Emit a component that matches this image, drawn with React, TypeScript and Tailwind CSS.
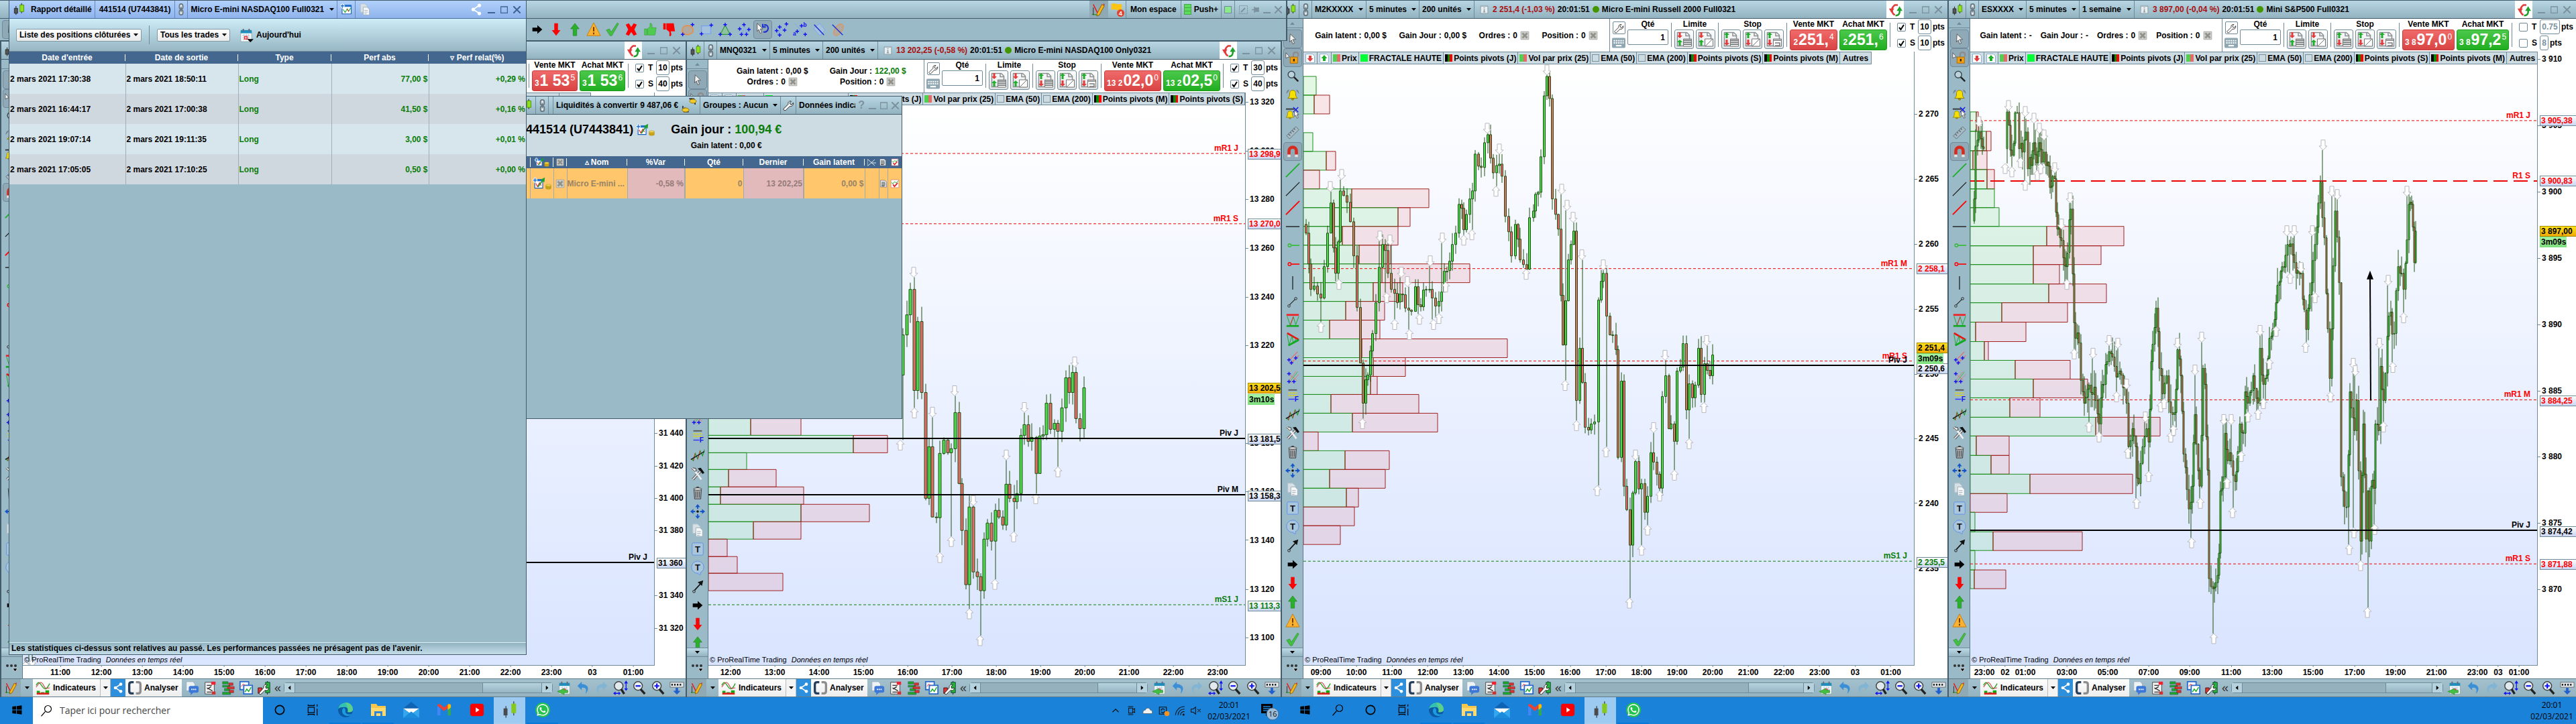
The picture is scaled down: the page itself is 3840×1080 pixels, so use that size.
import type { ReactNode } from 'react'
import { FaWhatsapp } from 'react-icons/fa'
import clsx from 'clsx'

type Tone = 'red' | 'green' | 'black' | 'last' | 'timer'

interface Level {
  y: number
  name: string
  tone: 'red' | 'green' | 'black'
  thick?: boolean
}

interface ChartData {
  x0: number
  y0: number
  w: number
  h: number
  step: number
  body: number
  wick: number
  series: number[][][]
  // tip of every fractal arrow
  tops: number[][]
  bottoms: number[][]
  // [top, bottom, end of green part, end of red part]
  volume: number[][]
  levels: Level[]
  prices: [number, string][]
  tags: [number, string, Tone][]
  times: [number, string][]
  trend?: boolean
}

/* ------------------------------------------------------------------ data */

const hours = (start: number, gap: number, labels: string[]): [number, string][] =>
  labels.map((l, i) => [start + i * gap, l])

const dow: ChartData = {
  x0: 34, y0: 157, w: 941, h: 836, step: 5, body: 4, wick: 12,
  series: [[[38, 960], [43, 972], [48, 968]]],
  tops: [],
  bottoms: [[38, 988], [48, 985]],
  volume: [],
  levels: [{ y: 840, name: 'Piv J', tone: 'black', thick: false }],
  prices: [[646, '31 440'], [695, '31 420'], [743, '31 400'], [791, '31 380'], [888, '31 340'], [937, '31 320']],
  tags: [[840, '31 360', 'black']],
  times: hours(90, 61, ['11:00', '12:00', '13:00', '14:00', '15:00', '16:00', '17:00', '18:00', '19:00', '20:00', '21:00', '22:00', '23:00', '03', '01:00']),
}

const nasdaq: ChartData = {
  x0: 1056, y0: 157, w: 800, h: 836, step: 5.5, body: 4, wick: 22,
  series: [[
    [1341, 560], [1346, 500], [1352, 470], [1357, 432], [1363, 583], [1368, 480], [1374, 586], [1380, 744], [1385, 667], [1390, 772], [1396, 773],
    [1401, 677], [1407, 657], [1413, 676], [1418, 670], [1424, 616], [1430, 722], [1434, 792], [1440, 873], [1445, 757],
    [1451, 854], [1457, 861], [1462, 882], [1467, 805], [1472, 781], [1478, 808], [1484, 762], [1489, 772], [1495, 784],
    [1500, 723], [1505, 744], [1512, 749], [1516, 737], [1522, 650], [1527, 634], [1533, 659], [1538, 653], [1545, 707],
    [1550, 651], [1555, 649], [1560, 602], [1566, 641], [1572, 632], [1577, 644], [1583, 609], [1589, 564], [1594, 586],
    [1599, 556], [1604, 625], [1610, 640], [1616, 579],
  ]],
  tops: [[1423, 591], [1390, 623], [1451, 755], [1500, 687], [1527, 616], [1362, 414], [1602, 548]],
  bottoms: [[1363, 609], [1342, 657], [1401, 825], [1418, 801], [1445, 909], [1461, 949], [1483, 865], [1511, 794], [1544, 737], [1577, 697]],
  volume: [
    [624, 650, 1119, 1194], [650, 676, 1272, 1323], [676, 701, 1113, 0], [701, 727, 1086, 1157], [727, 753, 1074, 1198],
    [753, 779, 1194, 1296], [779, 805, 1123, 1194], [805, 831, 0, 1084], [831, 856, 0, 1099], [856, 882, 0, 1167],
  ],
  levels: [
    { y: 229, name: 'mR1 J', tone: 'red' },
    { y: 334, name: 'mR1 S', tone: 'red' },
    { y: 655, name: 'Piv J', tone: 'black', thick: true },
    { y: 739, name: 'Piv M', tone: 'black', thick: true },
    { y: 903, name: 'mS1 J', tone: 'green' },
  ],
  prices: [[152, '13 320'], [225, '13 300'], [297, '13 280'], [370, '13 260'], [443, '13 240'], [515, '13 220'], [661, '13 180'], [733, '13 160'], [806, '13 140'], [879, '13 120'], [951, '13 100']],
  tags: [[230, '13 298,9', 'red'], [334, '13 270,0', 'red'], [579, '13 202,5', 'last'], [596, '3m10s', 'timer'], [655, '13 181,5', 'black'], [740, '13 158,3', 'black'], [904, '13 113,3', 'green']],
  times: hours(1089, 66, ['12:00', '13:00', '14:00', '15:00', '16:00', '17:00', '18:00', '19:00', '20:00', '21:00', '22:00', '23:00']),
}

const russell: ChartData = {
  x0: 1943, y0: 96, w: 910, h: 897, step: 4.42, body: 3, wick: 18,
  series: [[
    [1944, 335], [1947, 348], [1954, 432], [1969, 445], [1979, 348], [1984, 303], [1991, 408], [1998, 285], [2008, 302], [2018, 382], [2028, 542],
    [2032, 602], [2039, 560], [2046, 498], [2051, 452], [2061, 365], [2069, 408], [2079, 438], [2091, 440], [2104, 465],
    [2110, 428], [2118, 458], [2126, 432], [2135, 445], [2145, 450], [2153, 405], [2165, 365], [2175, 305], [2182, 343],
    [2186, 320], [2191, 297], [2195, 285], [2199, 230], [2204, 248], [2208, 250], [2213, 213], [2218, 201], [2222, 236], [2226, 258],
    [2231, 247], [2239, 263], [2244, 323], [2253, 382], [2259, 335], [2266, 388], [2276, 402], [2280, 325], [2286, 315],
    [2289, 290], [2293, 287], [2297, 234], [2302, 143], [2306, 114], [2310, 147], [2314, 297], [2319, 320], [2323, 342],
    [2330, 515], [2338, 388], [2346, 345], [2350, 598], [2355, 520], [2363, 638], [2368, 642], [2372, 633], [2377, 630],
    [2383, 448], [2390, 408], [2395, 472], [2404, 500], [2409, 522], [2412, 683], [2417, 569], [2421, 726], [2425, 761],
    [2430, 814], [2434, 736], [2438, 689], [2443, 730], [2447, 722], [2452, 765], [2456, 741], [2461, 676], [2465, 690],
    [2470, 708], [2474, 729], [2478, 592], [2483, 561], [2488, 640], [2491, 633], [2496, 659], [2500, 554], [2505, 548],
    [2509, 513], [2514, 612], [2518, 573], [2523, 594], [2527, 575], [2532, 520], [2536, 589], [2541, 543], [2545, 553],
    [2549, 561], [2553, 530],
  ]],
  tops: [
    [2306, 112], [2217, 199], [2235, 230], [2000, 268], [1983, 286], [2328, 290], [2057, 360], [2072, 366], [2089, 414],
    [2098, 428], [2132, 397], [2150, 363], [2336, 314], [2345, 332], [2358, 388], [2390, 403], [2482, 538], [2544, 516],
    [2438, 687], [2465, 646],
  ],
  bottoms: [
    [2230, 278], [1969, 481], [1996, 417], [2079, 477], [2067, 437], [2101, 492], [2116, 469], [2137, 477], [2145, 468],
    [2155, 421], [2182, 351], [2194, 343], [2275, 402], [2333, 568], [2031, 625], [2350, 628], [2381, 725], [2394, 667],
    [2429, 893], [2447, 814], [2456, 784], [2474, 733], [2496, 702], [2518, 655], [2540, 601],
  ],
  volume: [
    [114, 142, 1962, 0], [142, 170, 1959, 1982], [198, 226, 1957, 0], [226, 254, 1977, 1991], [254, 282, 0, 1967],
    [282, 310, 2015, 2130], [310, 338, 2084, 2102], [338, 366, 2001, 2084], [366, 394, 2026, 2073], [394, 422, 2060, 2191],
    [422, 450, 2047, 2091], [450, 478, 2006, 2064], [478, 506, 1982, 2057], [506, 534, 2030, 2247], [534, 562, 2047, 2095],
    [562, 589, 2043, 2053], [589, 617, 1984, 2115], [617, 645, 2016, 2143], [645, 673, 0, 1965], [673, 701, 2005, 2071],
    [701, 729, 1982, 2065], [729, 757, 2007, 2025], [757, 785, 0, 2019], [785, 813, 0, 1998],
  ],
  levels: [
    { y: 401, name: 'mR1 M', tone: 'red' },
    { y: 539, name: 'mR1 S', tone: 'red' },
    { y: 546, name: 'Piv J', tone: 'black', thick: true },
    { y: 838, name: 'mS1 J', tone: 'green' },
  ],
  prices: [[170, '2 270'], [267, '2 265'], [364, '2 260'], [461, '2 255'], [558, '2 250'], [654, '2 245'], [751, '2 240'], [848, '2 235']],
  tags: [[401, '2 258,1', 'red'], [550, '2 250,6', 'black'], [519, '2 251,4', 'last'], [535, '3m09s', 'timer'], [839, '2 235,5', 'green']],
  times: hours(1969, 53.1, ['09:00', '10:00', '11:00', '12:00', '13:00', '14:00', '15:00', '16:00', '17:00', '18:00', '19:00', '20:00', '21:00', '22:00', '23:00', '03', '01:00']),
}

const sp500: ChartData = {
  x0: 2937, y0: 96, w: 845, h: 897, step: 2.55, body: 2, wick: 26,
  series: [
    [[2940, 330], [2943, 297], [2945, 218], [2950, 197], [2953, 207], [2957, 222]],
    [
      [2989, 222], [2992, 167], [2995, 187], [2999, 232], [3004, 168], [3007, 168], [3010, 222], [3015, 227], [3020, 197],
      [3023, 252], [3028, 247], [3032, 213], [3036, 243], [3040, 213], [3044, 242], [3047, 227], [3052, 242], [3056, 280],
      [3060, 263], [3063, 267], [3067, 342], [3071, 355], [3080, 398], [3087, 312], [3092, 482], [3099, 512], [3102, 568],
      [3107, 602], [3114, 575], [3122, 578], [3129, 633], [3134, 574], [3141, 540], [3144, 525], [3152, 547], [3157, 558],
      [3162, 560], [3170, 602], [3173, 667], [3179, 640], [3188, 722], [3194, 667], [3200, 640], [3203, 660], [3207, 540],
      [3214, 460], [3219, 550], [3224, 588], [3230, 561], [3236, 616], [3242, 616], [3246, 522], [3251, 561], [3255, 678],
      [3263, 760], [3268, 726], [3272, 619], [3279, 726], [3284, 550], [3287, 574], [3291, 702], [3293, 864], [3299, 879],
      [3303, 870], [3308, 826], [3310, 733], [3314, 712], [3317, 647], [3321, 688], [3326, 688], [3332, 719], [3336, 674],
      [3339, 633], [3344, 647], [3347, 585], [3351, 602], [3359, 561], [3366, 602], [3369, 520], [3374, 574], [3379, 560],
      [3383, 505], [3393, 452], [3402, 398], [3410, 365], [3420, 392], [3430, 408], [3438, 492], [3451, 365], [3459, 272],
      [3465, 355], [3473, 565], [3481, 315], [3487, 422], [3490, 712], [3498, 757], [3503, 585], [3510, 643], [3513, 598],
      [3519, 808], [3523, 633], [3527, 805], [3530, 733], [3532, 808], [3535, 726], [3539, 729], [3541, 633], [3546, 643],
      [3549, 547], [3553, 598], [3556, 557], [3561, 472], [3569, 498], [3575, 398], [3583, 432], [3591, 305], [3595, 305],
      [3599, 392], [3601, 345],
    ],
  ],
  tops: [
    [2994, 165], [3019, 174], [3032, 184], [3040, 199], [3047, 209], [3063, 258], [2950, 189], [3463, 224], [3476, 293],
    [3484, 298], [3588, 293], [3086, 303], [3073, 342], [3120, 535], [3144, 516], [3157, 520], [3246, 520], [3282, 511],
    [3272, 560], [3369, 501], [3409, 352], [3420, 352], [3430, 407], [3447, 352], [3547, 520], [3560, 426], [3508, 550],
    [3170, 581], [3198, 630], [3315, 634], [3326, 634], [3511, 561],
  ],
  bottoms: [
    [2989, 244], [2999, 249], [3012, 235], [3019, 269], [3037, 254], [3042, 244], [3081, 417], [3092, 521], [3383, 536],
    [3393, 487], [3414, 408], [3437, 511], [3451, 437], [3567, 541], [3583, 467], [3114, 630], [3129, 645], [3155, 585],
    [3172, 669], [3185, 744], [3203, 704], [3221, 600], [3226, 595], [3236, 645], [3240, 635], [3267, 803], [3280, 744],
    [3300, 946], [3320, 714], [3328, 758], [3341, 674], [3351, 615], [3366, 611], [3374, 595], [3474, 585], [3502, 813],
    [3509, 788], [3519, 837], [3529, 907], [3540, 783], [3553, 630],
  ],
  volume: [
    [167, 196, 2946, 2949], [196, 225, 2961, 2968], [225, 253, 2941, 2962], [253, 282, 2962, 2973], [282, 310, 2973, 0],
    [310, 338, 2980, 0], [338, 367, 3051, 3166], [367, 395, 3031, 3132], [395, 424, 3031, 3070], [424, 452, 3054, 3140],
    [452, 481, 2984, 3082], [481, 510, 2945, 3020], [510, 538, 2958, 2964], [538, 566, 3004, 3086], [566, 594, 3031, 3112],
    [594, 623, 2996, 3041], [623, 651, 3124, 3220], [651, 680, 2946, 2995], [680, 708, 2968, 2995], [708, 737, 3026, 3179],
    [737, 765, 0, 2992], [765, 794, 2944, 0], [794, 822, 2971, 3104], [822, 851, 2944, 0], [851, 879, 2943, 2990],
  ],
  levels: [
    { y: 180, name: 'mR1 J', tone: 'red' },
    { y: 270, name: 'R1 S', tone: 'red', thick: true },
    { y: 597, name: 'mR1 M', tone: 'red' },
    { y: 792, name: 'Piv J', tone: 'black', thick: true },
    { y: 842, name: 'mR1 S', tone: 'red' },
  ],
  prices: [[88, '3 910'], [187, '3 905'], [286, '3 900'], [385, '3 895'], [484, '3 890'], [583, '3 885'], [681, '3 880'], [780, '3 875'], [879, '3 870']],
  tags: [[180, '3 905,38', 'red'], [270, '3 900,83', 'red'], [345, '3 897,00', 'last'], [361, '3m09s', 'timer'], [598, '3 884,25', 'red'], [793, '3 874,42', 'black'], [842, '3 871,88', 'red']],
  times: [
    [2958, '23:00'], [2989, '02'], [3019, '01:00'], [3081, '03:00'], [3142, '05:00'], [3203, '07:00'], [3264, '09:00'],
    [3326, '11:00'], [3387, '13:00'], [3448, '15:00'], [3510, '17:00'], [3571, '19:00'], [3632, '21:00'], [3693, '23:00'],
    [3724, '03'], [3755, '01:00'],
  ],
  trend: true,
}

const trades = [
  ['2 mars 2021 17:30:38', '2 mars 2021 18:50:11', 'Long', '77,00 $', '+0,29 %'],
  ['2 mars 2021 16:44:17', '2 mars 2021 17:00:38', 'Long', '41,50 $', '+0,16 %'],
  ['2 mars 2021 19:07:14', '2 mars 2021 19:11:35', 'Long', '3,00 $', '+0,01 %'],
  ['2 mars 2021 17:05:05', '2 mars 2021 17:10:25', 'Long', '0,50 $', '+0,00 %'],
]

/* ----------------------------------------------------------------- icons */

const I = ({ children, s = 24 }: { children: ReactNode; s?: number }) => (
  <svg width={s} height={s} viewBox="0 0 24 24" fill="none" className="shrink-0" aria-hidden="true">
    {children}
  </svg>
)

const Plus = ({ x, y }: { x: number; y: number }) => (
  <path d={`M${x - 3} ${y}h6M${x} ${y - 3}v6`} stroke="#1212f0" strokeWidth="1.6" />
)

const cursor = <path d="M3 2l9 9-4 0 2.5 6-2.5 1-2.5-6L3 15z" fill="#f4f4f4" stroke="#555" />
const bell = (
  <>
    <path d="M12 4c-4 0-5 3-5 7 0 3-1 4-3 6h16c-2-2-3-3-3-6 0-4-1-7-5-7z" fill="#f7e000" stroke="#8a7a00" />
    <path d="M10 18a2 2 0 004 0z" fill="#c9a500" stroke="#8a7a00" />
  </>
)
const calendar = (
  <>
    <path d="M4 6h17v16H4z" fill="#fff" stroke="#8aa" />
    <path d="M4 4h17v5H4z" fill="#1f8fc0" />
    <path d="M8 2v4M17 2v4" stroke="#667" strokeWidth="2" />
    <path d="M6 12h13M6 15h13M6 18h13M9 10v10M13 10v10M16 10v10" stroke="#bcd" />
    <path d="M10 14h4v4h-4z" stroke="#e33" strokeWidth="1.5" />
  </>
)

const icons: Record<string, ReactNode> = {
  pointer: <path d="M8 4l9 9-5 0 3 6-3 1-2-6-3 3z" fill="#f4f4f4" stroke="#555" />,
  lock: (
    <>
      <path d="M13 12V7c0-5 8-5 8 0v3" stroke="#8d8d8d" strokeWidth="2.5" />
      <path d="M8 11h12v10H8z" fill="#f2a012" stroke="#a86800" />
      <path d="M14 14v4" stroke="#222" strokeWidth="2.5" />
      <path d="M1 4l6 7-3 0-3 2z" fill="#fff" stroke="#555" />
    </>
  ),
  zoom: (
    <>
      <circle cx="10" cy="9" r="5.5" stroke="#3c4a52" strokeWidth="1.6" fill="#bcd3dd" />
      <path d="M14 13l7 7" stroke="#222" strokeWidth="2.6" />
    </>
  ),
  bell: <>{bell}<path d="M4 4L2 9M6 3L4 7M20 4l2 5M18 3l2 4" stroke="#667" /></>,
  bellCursor: (
    <>
      <path d="M1 4h14" stroke="#333" strokeWidth="2" />
      <g transform="translate(-2 4) scale(.8)">{bell}</g>
      <path d="M13 1l8 8M21 1l-8 8" stroke="#1212f0" strokeWidth="1.5" />
      <path d="M15 6l7 7-3 0 2 5-2 1-2-5-2 2z" fill="#fff" stroke="#555" />
    </>
  ),
  ruler: (
    <>
      <path d="M2 17L17 2l5 5L7 22z" fill="#a9bcc6" stroke="#5b6b75" />
      <path d="M5 14l3 3M8 11l2 2M11 8l3 3M14 5l2 2" stroke="#5b6b75" strokeWidth="1.5" />
    </>
  ),
  magnet: (
    <>
      <path d="M6 20v-9a6 6 0 0112 0v9" stroke="#d62b1f" strokeWidth="5" />
      <path d="M3.5 17h5v4h-5zM15.5 17h5v4h-5z" fill="#e4e4e4" />
    </>
  ),
  lineGreen: <path d="M1 23L23 1" stroke="#1fae2b" strokeWidth="2" />,
  lineBlack: <path d="M1 23L23 1" stroke="#111" strokeWidth="1.3" />,
  lineRed: <path d="M1 23L23 1" stroke="#f00" strokeWidth="2" />,
  hline: <path d="M1 12h22" stroke="#111" strokeWidth="1.4" />,
  pinGreen: <><circle cx="7" cy="12" r="2.5" stroke="#3b3" strokeWidth="1.5" /><path d="M10 12h13" stroke="#3b3" strokeWidth="1.8" /></>,
  pinRed: <><circle cx="7" cy="12" r="2.5" stroke="#f00" strokeWidth="1.5" /><path d="M10 12h13" stroke="#f00" strokeWidth="1.8" /></>,
  vline: <path d="M12 1v22" stroke="#111" strokeWidth="1.3" />,
  segment: <><circle cx="6" cy="19" r="2" stroke="#222" /><circle cx="17" cy="7" r="2" stroke="#222" /><path d="M7 17l9-9" stroke="#222" strokeWidth="1.3" /></>,
  channel: (
    <>
      <path d="M2 3h20" stroke="#e22" strokeWidth="3" />
      <path d="M2 21h20" stroke="#1a2" strokeWidth="3" />
      <path d="M3 5l5 15 5-14 4 13 5-14" stroke="#1a2" />
      <path d="M8 20l5-14" stroke="#e22" />
    </>
  ),
  wedge: (
    <>
      <path d="M3 2l19 11" stroke="#e11" strokeWidth="3" />
      <path d="M5 22l17-9" stroke="#1a2" strokeWidth="3" />
      <path d="M3 4l3 17 5-14 2 11 5-7" stroke="#1a2" />
    </>
  ),
  parallel: <><path d="M5 17L20 2M8 22L22 8" stroke="#d77" strokeWidth="1.5" /><Plus x={6} y={15} /><Plus x={17} y={12} /><Plus x={10} y={20} /></>,
  fork: <><path d="M4 20L18 3M9 22L22 8M4 6l15 12" stroke="#d77" /><path d="M6 22L20 4" stroke="#3b3" /><Plus x={6} y={7} /><Plus x={6} y={20} /><Plus x={14} y={20} /></>,
  fib: (
    <>
      <path d="M5 3h14" stroke="#555" strokeWidth="2" />
      <path d="M5 8h14M5 12h14" stroke="#e8d800" strokeWidth="1.6" strokeDasharray="3 1" />
      <path d="M5 18h10" stroke="#33f" strokeWidth="1.5" />
      <text x="15" y="22" fontSize="11" fontWeight="700" fill="#1212f0">F</text>
    </>
  ),
  zigzag: <><path d="M2 18l3 3 3-12 4 9 4-13 4 8 3-10" stroke="#1c9a2b" strokeWidth="1.3" /><path d="M5 21l3-12M12 18l4-13" stroke="#e22" /><path d="M1 19L23 6" stroke="#111" strokeWidth="1.4" /></>,
  tools: <><path d="M4 21L17 7" stroke="#333" strokeWidth="4" /><path d="M4 21L17 7" stroke="#ddd" strokeWidth="2.4" /><path d="M4 4l5 5 9 12" stroke="#eee" strokeWidth="3" /><path d="M12 3l5-1 6 8-3 2-4-5z" fill="#111" /><path d="M2 3l5 5 3-1-1-4-5-1" stroke="#333" fill="#ddd" /></>,
  trash: <><path d="M6 7h12l-1 15H7z" fill="#a9afb3" stroke="#333" /><ellipse cx="12" cy="6" rx="6.5" ry="2" fill="#ddd" stroke="#333" /><path d="M9 10v10M12 10v10M15 10v10" stroke="#333" /><path d="M10 3h4" stroke="#333" strokeWidth="1.5" /></>,
  move: <><path d="M12 2v6M12 16v6M2 12h6M16 12h6" stroke="#1555c8" strokeWidth="2" /><path d="M12 0l4 5H8zM12 24l4-5H8zM0 12l5-4v8zM24 12l-5-4v8z" fill="#1555c8" /><circle cx="12" cy="12" r="2" fill="#111" /></>,
  copy: <><path d="M4 2h8l4 4v11H4z" fill="#d7e0e5" stroke="#b4c2ca" /><path d="M9 8h7l4 4v10H9z" fill="#f5f7f8" stroke="#9aabb4" /><path d="M11 14h6M11 17h6M11 20h4" stroke="#9aabb4" /></>,
  textBox: <><rect x="3" y="2" width="18" height="20" rx="2" stroke="#5c8de8" fill="#a9c6dc" /><text x="7.5" y="17" fontSize="14" fontWeight="700" fill="#111">T</text></>,
  textBubble: <><circle cx="12" cy="11" r="10" stroke="#5c8de8" fill="#a9c6dc" /><path d="M12 21l4 3 1-5" fill="#a9c6dc" stroke="#5c8de8" /><text x="7.5" y="16" fontSize="14" fontWeight="700" fill="#111">T</text></>,
  arrowUpRight: <><path d="M7 18L18 6" stroke="#111" strokeWidth="2" /><path d="M21 2l-2 9-7-6z" fill="#111" /><circle cx="6" cy="20" r="2" stroke="#111" /></>,
  right: <path d="M4 9h8V5l8 7-8 7v-4H4z" fill="#000" />,
  down: <path d="M9 2h6v11h4l-7 9-7-9h4z" fill="#f80606" />,
  up: <path d="M9 22h6V11h4l-7-9-7 9h4z" fill="#2bb02b" stroke="#1c7a1c" strokeWidth=".6" />,
  warn: <><path d="M12 1l11 21H1z" fill="#f9b233" stroke="#c97b00" /><path d="M12 8v7M12 17v3" stroke="#7a3d00" strokeWidth="2.2" /></>,
  check: <path d="M2 13l5-2 3 5L20 1l2 2-11 19H8z" fill="#43c043" stroke="#2b8f2b" strokeWidth=".7" />,
  cross: <path d="M3 4l5-2 4 6 4-6 5 2-4 8 4 8-5 2-4-6-4 6-5-2 4-8z" fill="#f00" />,
  thumbUp: <path d="M3 11h4v10H3zM8 11l4-4V2c3 0 4 2 3 7h7l-2 12H8z" fill="#4fcb4f" stroke="#2c9a2c" strokeWidth=".6" />,
  thumbDown: <path d="M3 2h4v10H3zM8 12l5 4v7c3 0 4-2 2-8h7L20 2H8z" fill="#f00" />,
  ellipse: <><ellipse cx="12" cy="13" rx="9" ry="7.5" fill="#b4a99f" stroke="#f08a3c" strokeWidth="1.6" /><Plus x={4} y={20} /><Plus x={20} y={4} /></>,
  rect: <><path d="M4 6h15v13H4z" stroke="#7aa4ee" strokeWidth="1.5" fill="#a5c1dc" /><Plus x={4} y={19} /><Plus x={20} y={5} /></>,
  triangle: <><path d="M12 5l8 15H4z" fill="#8fc3a0" stroke="#2a9a3a" strokeWidth="1.3" /><Plus x={12} y={4} /><Plus x={4} y={20} /><Plus x={20} y={20} /></>,
  wave: <><path d="M3 16l4-7 3 10 3-14 3 14 4-8" stroke="#7aa4ee" /><Plus x={12} y={4} /><Plus x={5} y={11} /><Plus x={20} y={12} /><Plus x={8} y={20} /><Plus x={16} y={20} /></>,
  undo: <>{cursor}<path d="M14 5c7-3 10 9 2 11l-3 0M12 3v5h5" stroke="#1b2fd0" strokeWidth="2.2" /></>,
  waves: <><path d="M2 8l4 12 6-12 3 6 7-10" stroke="#7aa4ee" /><Plus x={4} y={14} /><Plus x={9} y={8} /><Plus x={17} y={13} /><Plus x={20} y={3} /><Plus x={9} y={21} /></>,
  abc: <><path d="M3 2l14 16M5 18L16 6" stroke="#7aa4ee" /><Plus x={14} y={6} /><Plus x={7} y={15} /><Plus x={20} y={20} /><text x="17" y="8" fontSize="9" fontWeight="700" fill="#1212f0">b</text><text x="0" y="22" fontSize="9" fontWeight="700" fill="#1212f0">a</text></>,
  diamond: <><path d="M13 2l9 11-9 9L3 10z" fill="#a5c1dc" stroke="#7aa4ee" /><path d="M4 4l16 17" stroke="#1b2fd0" strokeWidth="1.5" /></>,
  oval: <><path d="M18 3c8 2-2 20-10 19-8-3 2-21 10-19z" fill="#b4a99f" stroke="#f08a3c" /><path d="M3 4l17 17" stroke="#1b2fd0" strokeWidth="1.5" /></>,
  candles: (
    <>
      <path d="M7 6v16M17 1v18" stroke="#333" strokeWidth="1.4" />
      <path d="M4 10h6v9H4z" fill="#555" stroke="#222" />
      <path d="M14 4h7v12h-7z" fill="#8ce01c" stroke="#4a8a00" />
    </>
  ),
  chain: <><rect x="8.5" y="1" width="7" height="10" rx="3.5" stroke="#6b7a82" strokeWidth="2.4" fill="#dde6ea" /><rect x="8.5" y="13" width="7" height="10" rx="3.5" stroke="#6b7a82" strokeWidth="2.4" fill="#dde6ea" /><path d="M12 7v10" stroke="#6b7a82" strokeWidth="2" /></>,
  wrench: <path d="M3 19l9-9c-1-4 2-7 6-6l-3 3 1 3 3 1 3-4c1 5-3 8-7 7l-8 8c-3 1-5-1-4-3z" fill="#fff" stroke="#222" strokeWidth="1.3" />,
  keyboard: <><rect x="0" y="3" width="24" height="18" rx="2" fill="#8fa7b3" /><path d="M3 8h18M3 12h18" stroke="#fff" strokeWidth="2.5" strokeDasharray="2.5 1.5" /><path d="M7 17h10" stroke="#fff" strokeWidth="2.5" /></>,
  refresh: (
    <>
      <path d="M11 21C5 18 4 9 11 4h5" stroke="#e23b3b" strokeWidth="3" />
      <path d="M1 10h9l-5 7z" fill="#e23b3b" />
      <path d="M12 22c6 0 8-4 7-10" stroke="#1da02c" strokeWidth="3" />
      <path d="M14 14l5-8 5 8z" fill="#1da02c" />
    </>
  ),
  info: <><path d="M2 2h20v20H2z" fill="#e8eef1" stroke="#8fa0a8" strokeWidth="2" /><path d="M12 5v3M12 10v7M9 18h6" stroke="#8fa0a8" strokeWidth="3" /></>,
  pencil: <><path d="M3 4l8 16L21 3" stroke="#e11" strokeWidth="1.6" /><path d="M1 20l9 1" stroke="#2a9a2a" strokeWidth="1.5" /><path d="M9 19l8-15 4 2-8 15-4 2z" fill="#f5b51c" stroke="#8a5a00" /><path d="M3 9v12" stroke="#222" /></>,
  flag: <><path d="M3 3c6-3 10 3 17 0v10c-7 3-11-3-17 0z" fill="#fdc414" /><circle cx="18" cy="18" r="6" fill="#e0442f" /><text x="15" y="22" fontSize="10" fontWeight="700" fill="#fff">4</text></>,
  indic: <><path d="M1 8c4-8 6-4 10 2s7 5 12-5" stroke="#2aa52a" strokeWidth="1.5" /><path d="M1 11C6 3 9 0 13 8s6 4 10 4" stroke="#c44" strokeWidth="1.2" /><path d="M2 17h5v6H2zM9 19h5v4H9zM16 16h6v7h-6z" fill="#1a1" /><path d="M2 20h20v3H2z" fill="#d22" /></>,
  share: <><circle cx="18" cy="4" r="3.5" fill="#fff" /><circle cx="6" cy="12" r="3.5" fill="#fff" /><circle cx="18" cy="20" r="3.5" fill="#fff" /><path d="M18 4L6 12l12 8" stroke="#fff" strokeWidth="2.5" /></>,
  brackets: <><path d="M10 2H6c-3 0-4 1-4 4v12c0 3 1 4 4 4h4" stroke="#253f5c" strokeWidth="4" /><path d="M14 2h4c3 0 4 1 4 4v12c0 3-1 4-4 4h-4" stroke="#8d8d8d" strokeWidth="4" /></>,
  chat: <><path d="M3 2h11l3 4v11H3z" fill="#eef3f6" stroke="#9ab" /><rect x="7" y="9" width="16" height="11" rx="3" fill="#3c78d8" /><path d="M10 19v5l5-5z" fill="#3c78d8" /><path d="M11 14.5h8" stroke="#fff" strokeWidth="2" strokeDasharray="2 1" /></>,
  list: <><path d="M4 3h15v19H4z" fill="#efefef" stroke="#444" /><path d="M7 8h8M7 12l9 5M7 19h8M8 14l6-4" stroke="#333" strokeWidth="1.5" /><path d="M14 2h7v5h-7z" fill="#e23" /><path d="M15 18h6v5h-6z" fill="#c33" /></>,
  depth: <><path d="M3 2h9v4H3zM3 8h12v3H3zM6 13h9v4H6zM3 19h13v4H3z" fill="#1fa82c" stroke="#145" strokeWidth=".5" /><path d="M13 4h7v4h-7zM11 10h11v4H11zM14 16h7v4h-7z" fill="#d33" stroke="#511" strokeWidth=".5" /></>,
  layout: <><path d="M2 2h14v13H2z" fill="#fff" stroke="#2a6acb" strokeWidth="2" /><path d="M8 8h14v14H8z" fill="#fff" stroke="#2a6acb" strokeWidth="2" /><path d="M10 19l3-5 3 4 4-7" stroke="#1a2" strokeWidth="1.5" /><path d="M4 10l3-4 3 2" stroke="#e22" /></>,
  candleTool: <><path d="M17 1v22" stroke="#143" strokeWidth="1.3" /><path d="M14 3h7v17h-7z" fill="#27b53a" stroke="#143" /><path d="M2 12h6v9H2z" fill="#d33" stroke="#411" /><path d="M3 21l8-9c-1-4 3-6 6-5l-3 3 1 3 4-1c0 4-3 5-6 4l-7 7z" fill="#fff" stroke="#222" /></>,
  calBack: <>{calendar}<path d="M12 14v3h6v4h-6v3l-11-5z" fill="#43c043" stroke="#2b8f2b" strokeWidth=".7" transform="translate(0 -1)" /></>,
  calendar: <>{calendar}<path d="M14 18h10l-5 5z" fill="#000" /></>,
  undoBlue: <path d="M10 2L3 9l7 7v-4c6-1 9 2 6 10 8-8 4-16-6-16z" fill="#3a8fd6" />,
  redoBlue: <path d="M14 2l7 7-7 7v-4c-6-1-9 2-6 10C0 14 4 6 14 6z" fill="#82b4d4" />,
  zoomFit: <><circle cx="9" cy="9" r="7" fill="#dfe9ee" stroke="#444" strokeWidth="1.6" /><path d="M13 14l5 8" stroke="#222" strokeWidth="3.5" /><path d="M21 3v12M2 21h8" stroke="#1212f0" strokeWidth="1.4" /><path d="M21 0l3 5h-6zM21 17l3-4h-6zM0 21l4-3v6zM12 21l-3-3v6z" fill="#1212f0" /></>,
  zoomOut: <><circle cx="10" cy="9" r="7" fill="#e9f1f5" stroke="#444" strokeWidth="1.6" /><path d="M14 14l7 8" stroke="#222" strokeWidth="3.5" /><path d="M6 9h8" stroke="#1212f0" strokeWidth="2.4" /></>,
  zoomIn: <><circle cx="10" cy="9" r="7" fill="#e9f1f5" stroke="#444" strokeWidth="1.6" /><path d="M14 14l7 8" stroke="#222" strokeWidth="3.5" /><path d="M6 9h8M10 5v8" stroke="#1212f0" strokeWidth="2.4" /></>,
  pinDown: <><path d="M1 3h22v8H1z" fill="#e7edf0" stroke="#666" /><path d="M3 7h18" stroke="#222" strokeWidth="3" strokeDasharray="2.5 2" /><path d="M10 12h4v5h4l-6 6-6-6h4z" fill="#1f5fd0" /></>,
  cancel: <><path d="M2 2h20v20H2z" fill="#cfcfcb" stroke="#a5a5a0" strokeWidth="1.5" /><path d="M6 6l12 12M18 6L6 18" stroke="#92928d" strokeWidth="5" /></>,
  addList: <><path d="M4 4h18v17H4z" fill="#fff" stroke="#1e5fb8" strokeWidth="1.5" /><path d="M4 3h18v4H4z" fill="#1e6fd0" /><path d="M6 12l4 6 4-7 3 5 4-7" stroke="#1a2" strokeWidth="1.4" /><path d="M14 11l3 5" stroke="#e22" strokeWidth="1.4" /><path d="M0 5h9M4.5 1v9" stroke="#fff" strokeWidth="4" /><path d="M1 5h7M4.5 2v7" stroke="#1e6fd0" strokeWidth="1.8" /></>,
  addChart: (
    <>
      <path d="M4 5h15v16H4z" fill="#fff" stroke="#1e5fb8" strokeWidth="1.5" />
      <path d="M4 4h15v4H4z" fill="#1e6fd0" />
      <path d="M6 12l3 6 4-7 3 5" stroke="#e22" strokeWidth="1.4" />
      <path d="M10 19l9-13" stroke="#1da02c" strokeWidth="2.2" />
      <path d="M23 1l-1 9-7-5z" fill="#1da02c" />
      <path d="M0 6h9M4.5 1v10" stroke="#fff" strokeWidth="4" />
      <path d="M1 6h7M4.5 2v8" stroke="#1e6fd0" strokeWidth="1.8" />
    </>
  ),
  coinStack: <><path d="M2 6v13c0 4 20 4 20 0V6z" fill="#e8bf24" stroke="#8a6c00" /><path d="M2 11c0 4 20 4 20 0M2 15c0 4 20 4 20 0" stroke="#8a6c00" strokeWidth="1.5" /><ellipse cx="12" cy="6" rx="10" ry="3.5" fill="#f6dd5c" stroke="#8a6c00" /></>,
  coins: <><path d="M13 3c6-2 9 4 8 8M11 21c-6 2-9-4-8-8" stroke="#222" strokeWidth="1.6" /><path d="M12 2l8 0-2 7M12 22l-8 0 2-7" stroke="#222" /><ellipse cx="18" cy="6" rx="5" ry="3" fill="#f0cb30" stroke="#a07c00" /><ellipse cx="7" cy="19" rx="5" ry="3" fill="#f0cb30" stroke="#a07c00" /></>,
  whiteList: <><path d="M3 2h13l5 5v15H3z" fill="#e7edf0" stroke="#445" /><path d="M6 8h11M6 12h12M6 16h12M6 19h9" stroke="#222" strokeWidth="1.6" /></>,
  chartOk: <><path d="M2 2h20v20H2z" fill="#fff" stroke="#c66" /><path d="M3 9l4 3 4-5 5 3 5-6" stroke="#1a2" strokeWidth="1.6" /><path d="M7 14l4 5 8-9" stroke="#d22" strokeWidth="3" /></>,
}

const Icon = ({ name, s }: { name: string; s?: number }) => <I s={s}>{icons[name]}</I>

const Caret = ({ className = 'text-black' }: { className?: string }) => (
  <svg width="7" height="4" viewBox="0 0 7 4" className={clsx('pointer-events-none shrink-0', className)} aria-hidden="true">
    <path d="M0 0h7L3.5 4z" fill="currentColor" />
  </svg>
)

const TOOLS = [
  'pointer', 'lock', 'zoom', 'bell', 'bellCursor', 'ruler', 'magnet', 'lineGreen', 'lineBlack', 'lineRed', 'hline',
  'pinGreen', 'pinRed', 'vline', 'segment', 'channel', 'wedge', 'parallel', 'fork', 'fib', 'zigzag', 'tools', 'trash',
  'move', 'copy', 'textBox', 'textBubble', 'arrowUpRight', 'right', 'down', 'up', 'warn', 'check', 'cross', 'thumbUp',
  'thumbDown', 'ellipse', 'rect', 'triangle', 'wave', 'undo', 'waves', 'abc', 'diamond', 'oval',
]
const ACTIVE = ['pointer', 'lock', 'magnet', 'undo']

function ToolButton({ name }: { name: string }) {
  return (
    <button
      type="button"
      aria-label={name}
      className={clsx('flex h-7 w-7 shrink-0 items-center justify-center rounded-sm border', ACTIVE.includes(name) ? 'border-[#71899a] bg-[#90a9b6]' : 'border-transparent')}
    >
      <Icon name={name} s={22} />
    </button>
  )
}

/* --------------------------------------------------------------- windows */

function WindowButtons({ blue, help }: { blue?: boolean; help?: boolean }) {
  return (
    <div className={clsx('flex shrink-0 items-center', help ? 'gap-1.5 px-1' : 'gap-2 px-2', blue ? 'text-[#3f6494]' : 'text-[#7b929e]')}>
      {help && <button type="button" className="text-base font-bold">?</button>}
      <button type="button" aria-label="Réduire"><svg width="11" height="11" viewBox="0 0 11 11"><path d="M0 10h11" stroke="currentColor" strokeWidth="2" /></svg></button>
      <button type="button" aria-label="Agrandir"><svg width="11" height="11" viewBox="0 0 11 11" fill="none"><path d="M.5 1h10v9.5H.5zM0 1h11" stroke="currentColor" strokeWidth="1.5" /></svg></button>
      <button type="button" aria-label="Fermer"><svg width="11" height="11" viewBox="0 0 11 11"><path d="M0 0l11 11M11 0L0 11" stroke="currentColor" strokeWidth="2" /></svg></button>
    </div>
  )
}

function HeaderSelect({ value, label, className }: { value: string; label: string; className: string }) {
  return (
    <div className={clsx('flex shrink-0 items-center justify-between border-r border-[#6f8b99] px-1', className)}>
      <select aria-label={label} className="appearance-none bg-transparent font-bold">
        <option>{value}</option>
      </select>
      <Caret />
    </div>
  )
}

function ToolStrip() {
  return (
    <div className="flex w-8 shrink-0 flex-col items-center overflow-hidden border-r border-[#5f7b89] bg-[#9bbac8]">
      <button type="button" aria-label="Défiler vers le haut" className="mb-0.5 flex h-3.5 w-full shrink-0 items-center justify-center border-b border-[#6f8b99]">
        <Caret className="rotate-180 text-[#6f8b99]" />
      </button>
      <div className="flex min-h-0 flex-1 flex-col overflow-hidden">
        {TOOLS.slice(0, 33).map((t) => <ToolButton key={t} name={t} />)}
      </div>
      <button type="button" aria-label="Défiler vers le bas" className="flex h-3.5 w-full shrink-0 items-center justify-center border-y border-[#6f8b99] bg-linear-to-b from-[#bedbe7] to-[#93b3c1]">
        <Caret />
      </button>
      <button type="button" aria-label="Plus d'outils" className="flex h-8 w-full shrink-0 items-center justify-center">
        <svg width="20" height="14" viewBox="0 0 20 14">
          <circle cx="3" cy="4" r="2" fill="#333" /><circle cx="9" cy="4" r="2" fill="#333" /><circle cx="15" cy="4" r="2" fill="#333" />
          <path d="M11 8h7l-3.5 5z" fill="#000" stroke="#eee" strokeWidth=".7" />
        </svg>
      </button>
    </div>
  )
}

function OrderIcon({ flip, kind }: { flip?: boolean; kind: 'rows' | 'diag' | 'step' }) {
  const upArrow = <path d="M4 0l4 4H5.5v5h-3V4H0z" fill="#1fae2b" />
  const downArrow = <path d="M4 9l4-4H5.5V0h-3v5H0z" fill="#e23b3b" />
  return (
    <svg width="25" height="25" viewBox="0 0 25 25" fill="none" aria-hidden="true">
      <path d="M2.5 2.5h14l4 4v16h-18z" stroke="#8a8f92" strokeWidth="1.5" />
      <path d="M15 2.5v5h5" stroke="#8a8f92" strokeWidth="1.5" />
      <g transform="translate(2 2)">{flip ? upArrow : downArrow}</g>
      <g transform="translate(2 13)">{flip ? downArrow : upArrow}</g>
      <path d="M11.5 12h12v11h-12z" fill="#fff" stroke="#777" />
      {kind === 'rows' && <path d="M12 14h11M12 17h11M12 20h11" stroke="#7f8487" strokeWidth="2" />}
      {kind === 'diag' && <path d="M12 23l11-11" stroke="#777" />}
      {kind === 'step' && <path d="M12 14h11M14 18h7v4h-7" stroke="#777" strokeWidth="1.5" />}
    </svg>
  )
}

const Sep = () => <div className="mx-1 mt-1.5 h-9 w-px shrink-0 bg-[#6f8b99]" />

function OrderButton({ flip, kind, label }: { flip?: boolean; kind: 'rows' | 'diag' | 'step'; label: string }) {
  return (
    <button type="button" aria-label={label} className="flex h-[29px] w-[29px] items-center justify-center rounded-[3px] border border-[#6f8b99] bg-linear-to-b from-white to-[#dfe3e5]">
      <OrderIcon flip={flip} kind={kind} />
    </button>
  )
}

interface Price {
  lead: string
  main: string
  sup: string
}

function PriceButton({ title, price, className }: { title: string; price: Price; className: string }) {
  return (
    <div className="flex shrink-0 flex-col items-center">
      <span className="h-4 leading-4">{title}</span>
      <button type="button" aria-label={title} className={clsx('flex h-[31px] items-center justify-center gap-px rounded-[3px] border text-white', className)}>
        <span className="self-end pb-[3px]">{price.lead}</span>
        <span className="text-[23px]">{price.main}</span>
        <span className="self-start pt-0.5 font-normal">{price.sup}</span>
      </button>
    </div>
  )
}

function OffsetRow({ name, value, checked }: { name: string; value: string; checked?: boolean }) {
  return (
    <div className="flex h-[22px] items-center gap-1">
      <label className="flex items-center gap-1.5">
        <span className="grid h-[13px] w-[13px]">
          <input type="checkbox" defaultChecked={checked} className="peer h-[13px] w-[13px] appearance-none rounded-[2px] border border-[#6f8b99] bg-white [grid-area:1/1]" />
          <svg viewBox="0 0 13 13" fill="none" className="pointer-events-none hidden [grid-area:1/1] peer-checked:block"><path d="M3 7l2.5 3L10 3" stroke="#000" strokeWidth="2" /></svg>
        </span>
        <span className="w-2">{name}</span>
      </label>
      <input
        aria-label={`Décalage ${name}`}
        defaultValue={value}
        className={clsx('h-[22px] rounded-[3px] border border-[#6f8b99] bg-white text-center', checked ? 'w-5' : 'text-[#7b929e]', !checked && (value.length > 1 ? 'w-[30px]' : 'w-[13px]'))}
      />
      <span className="-ml-0.5">pts</span>
    </div>
  )
}

interface Quote {
  sell: Price
  buy: Price
  width: string
  offsets: [string, string]
  checked?: boolean
}

function OrderPanel({ sell, buy, width, offsets, checked }: Quote) {
  return (
    <div className="flex shrink-0 border-l border-[#6f8b99] pl-[3px]">
      <div className="mr-[3px] flex flex-col items-center gap-[3px] pt-1">
        <button type="button" aria-label="Réglages" className="flex h-[19px] w-[19px] items-center justify-center rounded-[2px] border border-[#6f8b99]"><Icon name="wrench" s={16} /></button>
        <button type="button" aria-label="Clavier"><Icon name="keyboard" s={20} /></button>
      </div>
      <label className="flex flex-col items-center">
        <span className="h-4 leading-4">Qté</span>
        <input defaultValue="1" className="h-[23px] w-[61px] rounded-[2px] border border-[#6f8b99] bg-white px-1 text-right" />
      </label>
      <Sep />
      <div className="flex flex-col items-center">
        <span className="h-4 leading-4">Limite</span>
        <div className="flex gap-[3px]">
          <OrderButton kind="rows" label="Limite" />
          <OrderButton kind="diag" label="Limite oblique" />
        </div>
      </div>
      <Sep />
      <div className="flex flex-col items-center">
        <span className="h-4 leading-4">Stop</span>
        <div className="flex gap-[3px]">
          <OrderButton flip kind="rows" label="Stop" />
          <OrderButton flip kind="diag" label="Stop oblique" />
          <OrderButton flip kind="step" label="Stop suiveur" />
        </div>
      </div>
      <Sep />
      <div className="flex gap-[3px]">
        <PriceButton title="Vente MKT" price={sell} className={clsx('border-[#c83a3a] bg-linear-to-b from-[#f06a6a] to-[#d94343]', width)} />
        <PriceButton title="Achat MKT" price={buy} className={clsx('border-[#1f9a1f] bg-linear-to-b from-[#4ac84a] to-[#1fae1f]', width)} />
      </div>
      <Sep />
      <div className="flex flex-col gap-0.5 pl-1.5 pt-px pr-1">
        <OffsetRow name="T" value={offsets[0]} checked={checked} />
        <OffsetRow name="S" value={offsets[1]} checked={checked} />
      </div>
    </div>
  )
}

const Swatch = ({ kind }: { kind: string }) => (
  <span className="flex h-[11px] w-[11px] shrink-0">
    {kind === 'vol' && <><i className="flex-1 bg-[#4fd04f]" /><i className="flex-1 bg-[#e56a6a]" /></>}
    {kind === 'green' && <i className="flex-1 bg-[#00ff37]" />}
    {kind === 'pivot' && <><i className="flex-1 bg-black" /><i className="flex-1 bg-[#0a8a0a]" /><i className="flex-1 bg-[#f00]" /></>}
    {kind === 'none' && <i className="flex-1 border border-[#7b929e]" />}
  </span>
)

const LEGEND = [
  ['vol', 'Prix'], ['green', 'FRACTALE HAUTE'], ['pivot', 'Points pivots (J)'], ['vol', 'Vol par prix (25)'],
  ['none', 'EMA (50)'], ['none', 'EMA (200)'], ['pivot', 'Points pivots (S)'], ['pivot', 'Points pivots (M)'],
]

function Legend({ order = LEGEND }: { order?: string[][] }) {
  return (
    <div className="flex h-[19px] shrink-0 overflow-hidden">
      {['down', 'up'].map((d) => (
        <button key={d} type="button" aria-label={d} className="flex w-[21px] shrink-0 items-center justify-center border-y border-r border-[#6f8b99] bg-[#cddbe3]">
          <svg width="14" height="14" viewBox="0 0 14 14"><path d="M.5.5h10l3 3v10H.5z" fill="#fff" stroke="#8fb0cc" /><path d={d === 'down' ? 'M7 12L2.5 7H5V3h4v4h2.5z' : 'M7 2l4.5 5H9v4H5V7H2.5z'} fill={d === 'down' ? '#e23b3b' : '#1fae2b'} /></svg>
        </button>
      ))}
      {order.map(([kind, text]) => (
        <button key={text} type="button" className="flex shrink-0 items-center gap-0.5 border-y border-r border-[#6f8b99] bg-[#cddbe3] px-0.5">
          <Swatch kind={kind} />
          {text}
        </button>
      ))}
      <button type="button" className="shrink-0 border-y border-r border-[#6f8b99] bg-[#cddbe3] px-1">Autres</button>
    </div>
  )
}

/* ----------------------------------------------------------------- chart */

const noise = (n: number) => {
  const v = Math.sin(n * 12.9898) * 43758.5453
  return v - Math.floor(v)
}

function buildCandles(data: ChartData) {
  const out: { x: number; o: number; c: number; hi: number; lo: number }[] = []
  data.series.forEach((points) => {
    for (let i = 1; i < points.length; i++) {
      const [xa, ya] = points[i - 1]
      const [xb, yb] = points[i]
      const n = Math.max(1, Math.round((xb - xa) / data.step))
      let open = ya
      for (let k = 1; k <= n; k++) {
        const seed = out.length + 1
        const sway = k < n ? (noise(seed * 3) - 0.5) * 30 : 0
        const close = ya + ((yb - ya) * k) / n + sway
        out.push({
          x: Math.round(xa + ((xb - xa) * k) / n),
          o: open,
          c: close,
          hi: Math.min(open, close) - noise(seed * 5) * data.wick,
          lo: Math.max(open, close) + noise(seed * 7) * data.wick,
        })
        open = close
      }
    }
  })
  const nearest = (x: number) => out.reduce((a, b) => (Math.abs(b.x - x) < Math.abs(a.x - x) ? b : a))
  data.tops.forEach(([x, y]) => {
    const c = nearest(x)
    c.hi = Math.min(c.o, c.c, y)
  })
  data.bottoms.forEach(([x, y]) => {
    const c = nearest(x)
    c.lo = Math.max(c.o, c.c, y)
  })
  return out
}

const toneColor = { red: '#f00000', green: '#0a7d0a', black: '#000' }

function Plot({ data }: { data: ChartData }) {
  const { x0, y0, w, h, body } = data
  const candles = buildCandles(data)
  const rect = (c: { x: number; o: number; c: number }) =>
    `M${c.x - body / 2} ${Math.round(Math.min(c.o, c.c))}h${body}v${Math.max(1, Math.round(Math.abs(c.c - c.o)))}h${-body}z`
  return (
    <svg viewBox={`${x0} ${y0} ${w} ${h}`} preserveAspectRatio="none" className="block h-full w-full" fill="none" role="img" aria-label="Graphique en chandeliers">
      {data.volume.map(([t, b, g, r]) => (
        <g key={t} strokeWidth="1" shapeRendering="crispEdges">
          {g > 0 && <path d={`M${x0} ${t}H${g}V${b}H${x0}z`} fill="#4fd04f" fillOpacity=".15" stroke="#1c8f1c" />}
          {r > 0 && <path d={`M${g || x0} ${t}H${r}V${b}H${g || x0}z`} fill="#e56a6a" fillOpacity=".16" stroke="#a02020" />}
        </g>
      ))}
      {data.levels.filter((l) => l.tone !== 'black').map((l) => (
        <path
          key={l.y}
          d={`M${x0} ${l.y}H${x0 + w}`}
          stroke={toneColor[l.tone]}
          strokeWidth={l.thick ? 2 : 1}
          strokeDasharray={l.thick ? '21 9' : '4 3'}
          shapeRendering="crispEdges"
        />
      ))}
      <g shapeRendering="crispEdges" stroke="#1e5210">
        <path d={candles.map((c) => `M${c.x} ${c.hi.toFixed(0)}V${c.lo.toFixed(0)}`).join('')} />
        <path d={candles.filter((c) => c.c <= c.o).map(rect).join('')} fill="#4fd94f" />
        <path d={candles.filter((c) => c.c > c.o).map(rect).join('')} fill="#e56a6a" />
      </g>
      <g fill="#fff" stroke="#b9b9bd">
        {data.tops.map(([x, y]) => <path key={`${x}-${y}`} d={`M${x} ${y}l-6-6h3v-9h6v9h3z`} />)}
        {data.bottoms.map(([x, y]) => <path key={`${x}-${y}`} d={`M${x} ${y}l-6 6h3v9h6v-9h3z`} />)}
      </g>
      {data.levels.filter((l) => l.tone === 'black').map((l) => (
        <path key={l.y} d={`M${x0} ${l.y}H${x0 + w}`} stroke="#000" strokeWidth={2} shapeRendering="crispEdges" />
      ))}
      {data.trend && <><path d="M3534 598L3533 415" stroke="#000" strokeWidth="2" /><path d="M3533 404l5 13h-10z" fill="#000" /></>}
    </svg>
  )
}

const tagClass: Record<Tone, string> = {
  red: 'right-0 border-[#6f8b99] bg-linear-to-b from-white to-[#ccd6f3] text-[#f00]',
  green: 'right-0 border-[#6f8b99] bg-linear-to-b from-white to-[#ccd6f3] text-[#0a7d0a]',
  black: 'right-0 border-[#6f8b99] bg-linear-to-b from-white to-[#ccd6f3] text-black',
  last: 'right-0 border-[#a98b00] bg-linear-to-b from-[#ffe11a] to-[#f0aa00] text-black',
  timer: 'border-[#7fe07f] bg-linear-to-b from-[#a5f5a5] to-[#7fdf7f] pr-px text-black',
}

const labelTone = { red: 'text-[#f00]', green: 'text-[#0a7d0a]', black: 'text-black' }

function ChartArea({ data, axisWidth, legend }: { data: ChartData; axisWidth: string; legend?: string[][] }) {
  const top = (y: number) => `${((y - data.y0) / data.h) * 100}%`
  const left = (x: number) => `${((x - data.x0) / data.w) * 100}%`
  return (
    <div className="flex min-h-0 flex-1 flex-col">
      <div className="flex min-h-0 flex-1">
        <div className="flex min-w-0 flex-1 flex-col">
          <Legend order={legend} />
          <div className="relative min-h-0 flex-1 border-b border-[#6f8b99] bg-linear-to-b from-white to-[#d9e4ff]">
            <Plot data={data} />
            {data.levels.map((l) => (
              <span key={l.name} className={clsx('absolute right-2.5 -translate-y-full leading-4', labelTone[l.tone])} style={{ top: top(l.y) }}>{l.name}</span>
            ))}
            <p className="absolute bottom-0 left-0.5 text-[11px] font-normal leading-[15px]">
              © ProRealTime Trading <i className="ml-1">Données en temps réel</i>
            </p>
          </div>
        </div>
        <div className={clsx('relative shrink-0 border-l border-[#6f8b99] bg-white pt-[19px]', axisWidth)}>
          <div className="relative h-full">
            {data.prices.map(([y, text]) => (
              <span key={text} className="absolute left-0 flex h-4 -translate-y-1/2 items-center gap-0.5" style={{ top: top(y) }}>
                <i className="h-px w-1 bg-[#6f8b99]" />
                {text}
              </span>
            ))}
            {data.tags.map(([y, text, tone]) => (
              <span key={text} className={clsx('absolute left-[3px] flex h-4 -translate-y-1/2 items-center border-y border-l pl-px', tagClass[tone])} style={{ top: top(y) }}>
                {text}
              </span>
            ))}
          </div>
        </div>
      </div>
      <div className="flex h-[19px] shrink-0 bg-white">
        <div className="relative flex-1">
          {data.times.map(([x, text]) => (
            <span key={text + x} className="absolute top-0 flex -translate-x-1/2 flex-col items-center leading-4" style={{ left: left(x) }}>
              <i className="h-0.5 w-px bg-[#6f8b99]" />
              {text}
            </span>
          ))}
        </div>
        <div className={clsx('shrink-0', axisWidth)} />
      </div>
    </div>
  )
}

function BottomBar() {
  return (
    <div className="flex h-7 shrink-0 items-center overflow-hidden border-y border-[#5f7b89] bg-linear-to-b from-[#a3c1cd] to-[#94b3c0]">
      <button type="button" aria-label="Dessin" className="flex h-full w-[29px] shrink-0 items-center justify-center bg-[#8fa9b5]"><Icon name="pencil" s={20} /></button>
      <div className="flex w-[18px] shrink-0 justify-center"><Caret /></div>
      <button type="button" className="flex h-full w-[100px] shrink-0 items-center gap-1 bg-linear-to-b from-white to-[#ececec] px-1"><Icon name="indic" s={22} />Indicateurs</button>
      <div className="flex h-full w-4 shrink-0 items-center justify-center border-x border-[#bbb] bg-[#f4f4f4]"><Caret /></div>
      <button type="button" aria-label="Partager" className="flex h-full w-[22px] shrink-0 items-center justify-center bg-[#2e8fdc]"><Icon name="share" s={16} /></button>
      <button type="button" className="flex h-full w-[84px] shrink-0 items-center gap-1 bg-linear-to-b from-white to-[#ececec] px-1"><Icon name="brackets" s={20} />Analyser</button>
      <div className="flex shrink-0 gap-[5px] pl-1">
        {['chat', 'list', 'depth', 'layout', 'candleTool'].map((n) => <button key={n} type="button" aria-label={n}><Icon name={n} s={22} /></button>)}
      </div>
      <span className="w-[18px] shrink-0 text-center text-lg font-normal leading-none text-[#333]">«</span>
      <div className="flex h-4 min-w-0 flex-1 rounded-sm border border-[#6f8b99] bg-[#94b1bd]">
        <button type="button" aria-label="Gauche" className="flex w-4 items-center justify-center border-r border-[#6f8b99] bg-[#b5d2de]"><Caret className="rotate-90" /></button>
        <div className="flex-1" />
        <div className="w-[22%] border-l border-[#6f8b99] bg-linear-to-b from-[#b5d2de] to-[#96b6c3]" />
        <button type="button" aria-label="Droite" className="flex w-4 items-center justify-center border-l border-[#6f8b99] bg-[#b5d2de]"><Caret className="-rotate-90" /></button>
      </div>
      <div className="flex shrink-0 items-center gap-1.5 pl-1.5 pr-0.5">
        {['calBack', 'undoBlue', 'redoBlue', 'zoomFit', 'zoomOut', 'zoomIn', 'pinDown'].map((n) => <button key={n} type="button" aria-label={n}><Icon name={n} s={22} /></button>)}
      </div>
    </div>
  )
}

interface ChartWindowProps {
  symbol: string
  symbolWidth: string
  range: string
  quoteText: string
  title: string
  stats: [string, string, boolean?][]
  compact?: boolean
  quote: Quote
  data: ChartData
  axisWidth: string
  legend?: string[][]
}

function ChartWindow({ symbol, symbolWidth, range, quoteText, title, stats, compact, quote, data, axisWidth, legend }: ChartWindowProps) {
  return (
    <section className="flex min-h-0 min-w-0 flex-col overflow-hidden border-l-2 border-t border-[#435c6b] bg-white">
      <header className="flex h-[27px] shrink-0 items-stretch overflow-hidden border-b border-[#435c6b] bg-linear-to-b from-[#b8d6e3] to-[#93b3c1]">
        <div className="flex w-[26px] shrink-0 items-center justify-center border-r border-[#6f8b99]"><Icon name="candles" s={19} /></div>
        <div className="flex w-[19px] shrink-0 items-center justify-center border-r border-[#6f8b99]"><Icon name="chain" s={19} /></div>
        <HeaderSelect label="Symbole" value={symbol} className={symbolWidth} />
        <HeaderSelect label="Unité de temps" value="5 minutes" className="w-[79px]" />
        <HeaderSelect label="Historique" value={range} className="w-[82px]" />
        <div className="flex min-w-0 flex-1 items-center gap-1 overflow-hidden pl-2">
          <Icon name="info" s={13} />
          <span className="ml-0.5 text-[#a80f0f]">{quoteText}</span>
          <span>20:01:51</span>
          <span className="h-2.5 w-2.5 shrink-0 rounded-full bg-[#439600]" />
          <h2>{title}</h2>
        </div>
        <button type="button" aria-label="Synchroniser" className="-mb-px flex w-[26px] shrink-0 items-center justify-center bg-white"><Icon name="refresh" s={21} /></button>
        <WindowButtons />
      </header>
      <div className="flex min-h-0 flex-1">
        <ToolStrip />
        <div className="flex min-h-0 min-w-0 flex-1 flex-col">
          <div className="flex h-[49px] shrink-0 justify-end overflow-hidden">
            <dl className={clsx('min-w-0 flex-1', compact ? 'grid grid-cols-2 content-center justify-items-center pl-6 pr-3' : 'flex items-center justify-around px-2')}>
              {stats.map(([k, v, good]) => (
                <div key={k} className="flex items-center gap-1">
                  <dt>{k} :</dt>
                  <dd className={clsx('flex items-center gap-1', good && 'text-[#0a7d0a]')}>
                    {v}
                    {(k === 'Ordres' || k === 'Position') && <Icon name="cancel" s={14} />}
                  </dd>
                </div>
              ))}
            </dl>
            <OrderPanel {...quote} />
          </div>
          <ChartArea data={data} axisWidth={axisWidth} legend={legend} />
        </div>
      </div>
      <BottomBar />
    </section>
  )
}

function WorkspaceBar() {
  return (
    <div className="relative z-10 -mr-[10px] flex h-[61px] shrink-0 flex-col border-b border-r-2 border-t border-[#435c6b] bg-[#9bbac8]">
      <div className="flex h-[27px] shrink-0 items-stretch justify-end border-b border-[#435c6b] bg-linear-to-b from-[#b8d6e3] to-[#93b3c1]">
        <button type="button" aria-label="Outils de dessin" className="flex w-7 items-center justify-center bg-[#8fa9b5]"><Icon name="pencil" s={22} /></button>
        <button type="button" aria-label="Alertes" className="flex w-[27px] items-center justify-center border-r border-[#6f8b99]"><Icon name="flag" s={22} /></button>
        <button type="button" className="border-r border-[#6f8b99] px-1.5">Mon espace</button>
        <button type="button" className="flex items-center gap-1 border-r border-[#6f8b99] px-1">
          <span className="flex h-4 w-[11px] flex-col divide-y divide-[#47a447] border border-[#47a447]"><i className="flex-1 bg-[#5bdc5b]" /><i className="flex-1 bg-[#5bdc5b]" /><i className="flex-1 bg-[#5bdc5b]" /></span>
          Push+
        </button>
        <button type="button" aria-label="État" className="flex w-5 items-center justify-center border-r border-[#6f8b99]"><i className="h-[11px] w-[11px] border border-[#6f8b99] bg-[#8cea8c]" /></button>
        <div className="flex items-center gap-1.5 px-1.5 text-[#7b929e]">
          <svg width="13" height="13" viewBox="0 0 13 13" fill="none"><path d="M.5.5h12v12H.5z" stroke="currentColor" strokeDasharray="2 1" /><path d="M3 10l6-6" stroke="currentColor" strokeWidth="2" /></svg>
          <svg width="11" height="9" viewBox="0 0 11 9"><path d="M0 4.5h4M4 0v9M4 2h5v5H4zM10 1v7" stroke="currentColor" strokeWidth="1.5" fill="currentColor" /></svg>
          <svg width="11" height="11" viewBox="0 0 11 11"><path d="M0 10h11" stroke="currentColor" strokeWidth="2" /></svg>
          <svg width="11" height="11" viewBox="0 0 11 11"><path d="M0 0l11 11M11 0L0 11" stroke="currentColor" strokeWidth="2" /></svg>
        </div>
      </div>
      <div className="flex flex-1 items-center pl-[3px]">
        {TOOLS.map((t) => <ToolButton key={t} name={t} />)}
      </div>
    </div>
  )
}

function ReportWindow() {
  return (
    <section className="absolute left-[13px] top-0 z-30 flex h-[977px] w-[772px] flex-col border border-[#435c6b] bg-[#9bbac8]">
      <header className="flex h-[27px] shrink-0 items-stretch border-b border-[#4c6fa0] bg-linear-to-b from-[#b1d0fb] to-[#8fb4ec]">
        <div className="flex items-center gap-2 border-r border-[#6688bb] px-1"><Icon name="candles" s={20} /><h2>Rapport détaillé</h2></div>
        <span className="flex items-center border-r border-[#6688bb] px-1.5">441514 (U7443841)</span>
        <span className="flex items-center border-r border-[#6688bb]"><Icon name="chain" s={18} /></span>
        <label className="flex items-center gap-2 border-r border-[#6688bb] px-1">
          <select aria-label="Instrument" className="appearance-none bg-transparent font-bold"><option>Micro E-mini NASDAQ100 Full0321</option></select>
          <Caret />
        </label>
        <button type="button" aria-label="Ajouter" className="border-r border-[#6688bb] px-1"><Icon name="addList" s={18} /></button>
        <button type="button" aria-label="Copier" className="px-1"><Icon name="copy" s={20} /></button>
        <div className="flex-1" />
        <button type="button" aria-label="Partager"><Icon name="share" s={18} /></button>
        <WindowButtons blue />
      </header>
      <div className="flex h-[49px] shrink-0 items-center border-b border-[#6f8b99] bg-linear-to-b from-[#cdecf8] to-[#98b7c4] px-2.5">
        <label className="flex h-[19px] items-center gap-1 rounded-[2px] border border-[#7f98a4] bg-linear-to-b from-white to-[#e9e9e9] px-1">
          <select aria-label="Vue" className="appearance-none bg-transparent font-bold"><option>Liste des positions clôturées</option></select>
          <Caret />
        </label>
        <span className="mx-[11px] h-7 w-px bg-[#6f8b99]" />
        <label className="flex h-[19px] items-center gap-1 rounded-[2px] border border-[#7f98a4] bg-linear-to-b from-white to-[#e9e9e9] px-1">
          <select aria-label="Filtre" className="appearance-none bg-transparent font-bold"><option>Tous les trades</option></select>
          <Caret />
        </label>
        <button type="button" className="ml-3 flex items-center gap-1"><Icon name="calendar" s={23} />Aujourd'hui</button>
      </div>
      <table className="w-full table-fixed border-collapse">
        <colgroup>
          <col className="w-[173px]" /><col className="w-[168px]" /><col className="w-[139px]" /><col className="w-[145px]" /><col />
        </colgroup>
        <thead>
          <tr className="h-[18px] bg-[#43678f] font-normal text-white">
            {["Date d'entrée", 'Date de sortie', 'Type', 'Perf abs', '▿ Perf relat(%)'].map((t, i) => (
              <th key={t} className="p-0 py-0.5 font-bold leading-[14px]"><div className={clsx('h-2.5 leading-[10px]', i < 4 && 'border-r border-white')}>{t}</div></th>
            ))}
          </tr>
        </thead>
        <tbody>
          {trades.map((row, r) => (
            <tr key={row[0]} className={clsx('h-[45px]', r % 2 ? 'bg-[#d0d8df]' : 'bg-[#d7e6ed]')}>
              {row.map((cell, i) => (
                <td key={i} className={clsx('border-r border-[#9fb0ba] px-px py-0 last:border-r-0', i > 1 && 'text-[#0a7d0a]', i > 2 && 'text-right')}>{cell}</td>
              ))}
            </tr>
          ))}
        </tbody>
      </table>
      <div className="flex-1" />
      <p className="h-[18px] shrink-0 border-t border-[#dceef5] bg-linear-to-b from-[#93b3c1] to-[#c3dde8] px-[3px] leading-[17px]">
        Les statistiques ci-dessus sont relatives au passé. Les performances passées ne présagent pas de l'avenir.
      </p>
    </section>
  )
}

function PortfolioWindow() {
  return (
    <section className="absolute left-[759px] top-[143px] z-20 flex h-[482px] w-[586px] flex-col border border-[#435c6b] bg-[#9bbac8]">
      <header className="flex h-[27px] shrink-0 items-stretch overflow-hidden border-b border-[#435c6b] bg-linear-to-b from-[#b8d6e3] to-[#93b3c1]">
        <div className="flex w-[39px] shrink-0 items-center justify-end border-r border-[#6f8b99] pr-1"><Icon name="candles" s={20} /></div>
        <div className="flex w-[19px] shrink-0 items-center justify-center border-r border-[#6f8b99]"><Icon name="chain" s={19} /></div>
        <div className="ml-1.5 flex items-center gap-1 border-x border-[#6f8b99] px-1"><span>Liquidités à convertir</span><span>9 487,06 €</span><Icon name="coins" s={24} /></div>
        <label className="flex items-center gap-1.5 border-r border-[#6f8b99] px-1">
          <select aria-label="Groupes" className="appearance-none bg-transparent font-bold"><option>Groupes : Aucun</option></select>
          <Caret />
        </label>
        <button type="button" aria-label="Réglages" className="border-r border-[#6f8b99] px-0.5"><Icon name="wrench" s={18} /></button>
        <span className="min-w-0 flex-1 self-center overflow-hidden pl-1">Données indicatives</span>
        <WindowButtons help />
      </header>
      <div className="flex h-[62px] shrink-0 gap-6 bg-[#cddbe3] pl-6 pt-2.5">
        <div className="flex h-6 items-center gap-1 text-lg">441514 (U7443841)<span className="flex items-end"><Icon name="addChart" s={19} /><Icon name="coinStack" s={9} /></span></div>
        <div className="flex flex-col items-center gap-1">
          <p className="text-lg leading-6">Gain jour : <b className="text-[#0a7d0a]">100,94 €</b></p>
          <p>Gain latent : 0,00 €</p>
        </div>
      </div>
      <table className="w-full table-fixed border-collapse">
        <colgroup>
          <col className="w-[30px]" /><col className="w-[35px]" /><col className="w-[20px]" /><col className="w-[90px]" /><col className="w-[86px]" />
          <col className="w-[87px]" /><col className="w-[90px]" /><col className="w-[91px]" /><col className="w-[21px]" /><col className="w-[13px]" /><col />
        </colgroup>
        <thead>
          <tr className="h-[18px] bg-[#43678f] text-white">
            <th />
            <th className="p-0"><div className="flex items-end justify-center border-x border-white"><Icon name="addChart" s={14} /><Icon name="coinStack" s={8} /></div></th>
            <th className="p-0"><div className="flex justify-center border-r border-white"><Icon name="cancel" s={12} /></div></th>
            {['▵ Nom', '%Var', 'Qté', 'Dernier', 'Gain latent'].map((t) => (
              <th key={t} className="p-0"><div className="h-2.5 border-r border-white leading-[10px]">{t}</div></th>
            ))}
            <th className="p-0"><svg width="13" height="11" viewBox="0 0 13 11" className="mx-auto"><path d="M0 0v11M1 1l10 9M1 10l10-9M6 6h7" stroke="#dfe8ee" /></svg></th>
            <th className="p-0"><Icon name="whiteList" s={12} /></th>
            <th className="p-0"><span className="flex justify-center"><Icon name="chartOk" s={12} /></span></th>
          </tr>
        </thead>
        <tbody>
          <tr className="h-[45px] bg-[#ffc66b] text-right text-[#978468]">
            <td className="border-r border-[#a5a9a5]" />
            <td className="border-r border-[#a5a9a5] p-0"><span className="flex items-end justify-center"><Icon name="addChart" s={19} /><Icon name="coinStack" s={9} /></span></td>
            <td className="border-r border-[#a5a9a5] p-0"><span className="flex justify-center"><Icon name="cancel" s={14} /></span></td>
            <td className="whitespace-nowrap border-r border-[#a5a9a5] p-0 text-left">Micro E-mini ...</td>
            <td className="border-r-2 border-[#a5a9a5] bg-[#e3babb] p-0 pr-px text-[#957a7a]">-0,58 %</td>
            <td className="border-r border-[#a5a9a5] p-0 pr-px">0</td>
            <td className="border-r-2 border-[#a5a9a5] bg-[#e3babb] p-0 pr-px text-[#957a7a]">13 202,25</td>
            <td className="border-r border-[#a5a9a5] p-0 pr-px">0,00 $</td>
            <td className="border-r border-[#a5a9a5]" />
            <td className="border-r border-[#a5a9a5] p-0"><Icon name="whiteList" s={12} /></td>
            <td className="p-0"><span className="flex justify-center"><Icon name="chartOk" s={14} /></span></td>
          </tr>
        </tbody>
      </table>
    </section>
  )
}

/* --------------------------------------------------------------- taskbar */

const taskIcons: Record<string, ReactNode> = {
  Démarrer: <I s={20}><path d="M4 6l7-1v6.5H4zM12 5l9-1v7.5h-9zM4 12.5h7V19l-7-1zM12 12.5h9V20l-9-1z" fill="#000" /></I>,
  Rechercher: <I s={20}><circle cx="15" cy="9" r="6" stroke="#000" strokeWidth="1.4" /><path d="M10 14l-7 8" stroke="#000" strokeWidth="1.6" /></I>,
  Cortana: <I s={20}><circle cx="12" cy="12" r="8" stroke="#000" strokeWidth="2" /></I>,
  'Applications actives': <I s={20}><path d="M4 7h11v10H4zM4 2v2h11V2M4 22v-2h11v2M20 2v4M20 10v12" stroke="#000" strokeWidth="1.4" /></I>,
  Edge: (
    <I s={24}>
      <circle cx="12" cy="12" r="11" fill="#0c59a4" />
      <path d="M1 11C2 4 8 1 12 1c7 0 11 5 11 10 0 4-4 5-8 4 2-4-1-8-6-7-4 0-7 1-8 3z" fill="#35c1b1" />
      <path d="M12 1c7 0 11 5 11 10 0 4-4 5-8 4 2-3 0-8-3-14z" fill="#5cd08a" />
      <path d="M9 9c-4 3-2 12 6 12 3 0 5-1 6-3-6 2-10-1-9-5 0-2-1-4-3-4z" fill="#1b9de2" />
    </I>
  ),
  Explorateur: <I s={24}><path d="M1 3h8l2 3h12v15H1z" fill="#f7c64a" /><path d="M1 9h22v12H1z" fill="#ffd96b" /><path d="M6 14h12v7h-3v-4H9v4H6z" fill="#2f86d6" /></I>,
  Courrier: <I s={26}><path d="M12 1l11 9v13H1V10z" fill="#0f63b4" /><path d="M1 10h22L12 18z" fill="#fff" /><path d="M1 10l11 8 11-8v13H1z" fill="#35a7ee" /><path d="M1 23l11-9 11 9" fill="#1b8bdc" /></I>,
  Gmail: <I s={22}><path d="M1 5v16h5V10z" fill="#4285f4" /><path d="M23 5v16h-5V10z" fill="#34a853" /><path d="M1 5c0-3 3-3 5-2l6 5 6-5c2-1 5-1 5 2l-11 9z" fill="#ea4335" /><path d="M18 3c2-1 5-1 5 2v3l-5 4z" fill="#fbbc04" /></I>,
  YouTube: <I s={22}><rect x="1" y="2" width="22" height="20" rx="4" fill="#f00" /><path d="M10 8l6 4-6 4z" fill="#fff" /></I>,
  ProRealTime: <I s={28}><path d="M7 7v15M17 1v18" stroke="#333" /><path d="M4 10h5v9H4z" fill="#4a4a4a" /><path d="M14 4h6v12h-6z" fill="#86c81c" /></I>,
  WhatsApp: <span className="flex h-[22px] w-[22px] items-center justify-center rounded-full bg-[#25c34f]"><FaWhatsapp size={20} color="#fff" /></span>,
}

const PINNED = ['Cortana', 'Applications actives', 'Edge', 'Explorateur', 'Courrier', 'Gmail', 'YouTube', 'ProRealTime', 'WhatsApp']
const OPEN = ['Edge', 'Explorateur', 'WhatsApp']

function TaskButton({ name }: { name: string }) {
  return (
    <button
      type="button"
      aria-label={name}
      className={clsx('mx-px flex h-full w-[47px] shrink-0 items-center justify-center border-b-2', name === 'ProRealTime' ? 'border-[#a3cdf0] bg-[#9dcaf0]' : OPEN.includes(name) ? 'border-[#0878d8]' : 'border-transparent')}
    >
      {taskIcons[name]}
    </button>
  )
}

const Clock = () => (
  <time dateTime="2021-03-02T20:01" className="flex w-[72px] flex-col items-center leading-[17px]">
    <span>20:01</span>
    <span>02/03/2021</span>
  </time>
)

function Taskbar({ main }: { main?: boolean }) {
  return (
    <footer className="flex min-w-0 flex-1 items-center overflow-hidden bg-[#1a82d8] font-['Open_Sans','Noto_Sans',sans-serif] font-normal">
      <TaskButton name="Démarrer" />
      {main ? (
        <label className="flex h-full w-[343px] shrink-0 items-center gap-2.5 bg-white pl-2.5">
          {taskIcons.Rechercher}
          <input aria-label="Rechercher" placeholder="Taper ici pour rechercher" className="flex-1 bg-transparent text-sm placeholder:text-[#444]" />
        </label>
      ) : (
        <TaskButton name="Rechercher" />
      )}
      {PINNED.map((n) => <TaskButton key={n} name={n} />)}
      <div className="flex-1" />
      {main && (
        <div className="mr-1 flex items-center gap-1.5">
          <I s={18}><path d="M6 15l6-6 6 6" stroke="#111" strokeWidth="1.6" /></I>
          <I s={18}><path d="M6 7h8v10H6zM14 10l4-2v8l-4-2M5 4h10M5 20h10" stroke="#111" strokeWidth="1.4" /></I>
          <I s={18}><path d="M3 18c-2-5 2-7 4-7 2-6 9-5 10 0 4 0 5 5 3 7z" fill="#f2f2f2" stroke="#555" /></I>
          <I s={18}><path d="M3 5h14v14H3z" stroke="#111" strokeWidth="1.5" /><path d="M7 12a3 3 0 016-1M13 13a3 3 0 01-6 1" stroke="#111" strokeWidth="1.5" /><circle cx="18" cy="18" r="5" fill="#f7931e" /></I>
          <I s={18}><path d="M3 21C4 11 11 4 21 4M8 21c0-7 5-12 13-12M13 21c0-4 3-7 8-7" stroke="#111" strokeWidth="1.4" /><circle cx="19" cy="20" r="2" fill="#111" /></I>
          <I s={18}><path d="M2 9h4l5-4v14l-5-4H2zM15 9l6 6M21 9l-6 6" stroke="#111" strokeWidth="1.4" /></I>
        </div>
      )}
      <Clock />
      {main && (
        <button type="button" aria-label="16 notifications" className="mr-1 flex w-12 shrink-0 items-end justify-center">
          <svg width="30" height="30" viewBox="0 0 30 30">
            <path d="M3 5h17v14h-6l-4 4v-4H3z" fill="#000" /><path d="M6 9h11M6 12h11M6 15h8" stroke="#1a82d8" strokeWidth="1.5" />
            <circle cx="20" cy="20" r="9" fill="#9dbdd8" stroke="#3a6ea0" /><text x="14" y="24" fontSize="11" fill="#111">16</text>
          </svg>
        </button>
      )}
    </footer>
  )
}

/* ------------------------------------------------------------------- app */

const byVolume = [...LEGEND.slice(0, 6), LEGEND[7], LEGEND[6]]

export default function App() {
  return (
    <div className="flex h-screen flex-col overflow-hidden whitespace-nowrap bg-[#9bbac8] font-['Liberation_Sans',Arial,sans-serif] text-xs font-bold text-black">
      <main className="grid min-h-0 flex-1 grid-cols-[1909fr_994fr_937fr]">
        <div className="relative flex min-h-0 min-w-0 flex-col">
          <WorkspaceBar />
          <div className="grid min-h-0 flex-1 grid-cols-[1022fr_887fr]">
            <ChartWindow
              symbol="YM0321"
              symbolWidth="w-20"
              range="200 unités"
              quoteText="31 535 (-0,02 %)"
              title="Mini Dow Jones"
              compact
              stats={[['Gain latent', '0,00 $'], ['Gain Jour', '0,00 $'], ['Ordres', '0'], ['Position', '0']]}
              quote={{ sell: { lead: '3', main: '1 53', sup: '5' }, buy: { lead: '3', main: '1 53', sup: '6' }, width: 'w-[68px]', offsets: ['10', '40'], checked: true }}
              data={dow}
              axisWidth="w-[47px]"
            />
            <ChartWindow
              symbol="MNQ0321"
              symbolWidth="w-[79px]"
              range="200 unités"
              quoteText="13 202,25 (-0,58 %)"
              title="Micro E-mini NASDAQ100 Only0321"
              compact
              stats={[['Gain latent', '0,00 $'], ['Gain Jour', '122,00 $', true], ['Ordres', '0'], ['Position', '0']]}
              quote={{ sell: { lead: '13 2', main: '02,0', sup: '0' }, buy: { lead: '13 2', main: '02,5', sup: '0' }, width: 'w-[85px]', offsets: ['30', '40'], checked: true }}
              data={nasdaq}
              axisWidth="w-[53px]"
              legend={byVolume}
            />
          </div>
          <ReportWindow />
          <PortfolioWindow />
        </div>
        <ChartWindow
          symbol="M2KXXXX"
          symbolWidth="w-[81px]"
          range="200 unités"
          quoteText="2 251,4 (-1,03 %)"
          title="Micro E-mini Russell 2000 Full0321"
          stats={[['Gain latent', '0,00 $'], ['Gain Jour', '0,00 $'], ['Ordres', '0'], ['Position', '0']]}
          quote={{ sell: { lead: '2', main: '251,', sup: '4' }, buy: { lead: '2', main: '251,', sup: '6' }, width: 'w-[71px]', offsets: ['10', '10'], checked: true }}
          data={russell}
          axisWidth="w-[50px]"
        />
        <ChartWindow
          symbol="ESXXXX"
          symbolWidth="w-[71px]"
          range="1 semaine"
          quoteText="3 897,00 (-0,04 %)"
          title="Mini S&P500 Full0321"
          stats={[['Gain latent', '-'], ['Gain Jour', '-'], ['Ordres', '0'], ['Position', '0']]}
          quote={{ sell: { lead: '3 8', main: '97,0', sup: '0' }, buy: { lead: '3 8', main: '97,2', sup: '5' }, width: 'w-[78px]', offsets: ['0.75', '8'] }}
          data={sp500}
          axisWidth="w-[58px]"
        />
      </main>
      <div className="flex h-10 shrink-0">
        <Taskbar main />
        <Taskbar />
      </div>
    </div>
  )
}
